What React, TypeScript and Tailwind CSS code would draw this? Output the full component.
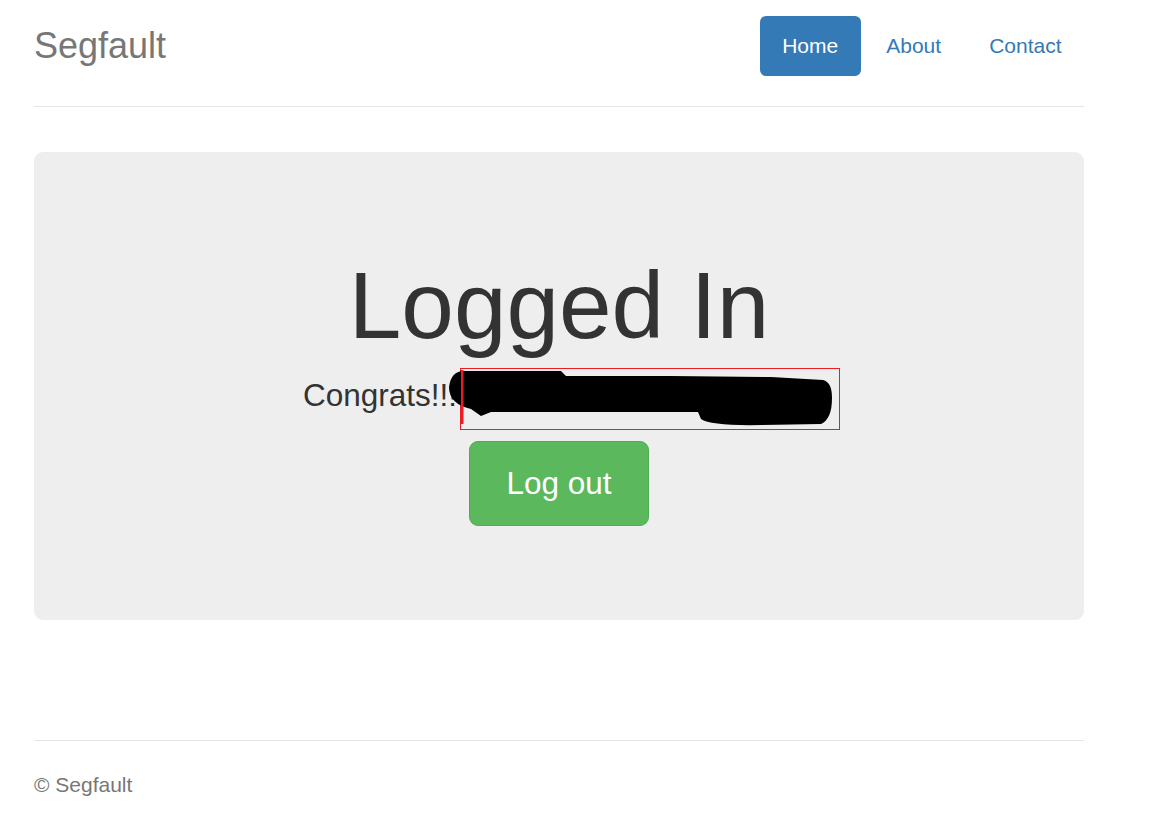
export default function App() {
  const links = ["Home", "About", "Contact"];

  return (
    <div className="min-h-[831px] bg-white font-['Liberation_Sans',Arial,sans-serif] text-[#333]">
      <div className="ml-[34px] w-[1050px]">
        {/* header */}
        <div className="flex items-start justify-between border-b border-[#e5e5e5] pt-[16px] pb-[30px]">
          <h3 className="text-[36px] leading-[60px] text-[#777]">Segfault</h3>
          <ul className="flex gap-[3px]">
            {links.map((l) => (
              <li key={l}>
                <a
                  href="#"
                  className={
                    l === "Home"
                      ? "block rounded-[6px] bg-[#337ab7] px-[22.5px] py-[15px] text-[21px] leading-[30px] text-white"
                      : "block rounded-[6px] px-[22.5px] py-[15px] text-[21px] leading-[30px] text-[#337ab7]"
                  }
                >
                  {l}
                </a>
              </li>
            ))}
          </ul>
        </div>

        {/* jumbotron */}
        <div className="mt-[45px] rounded-[9px] bg-[#eee] px-[90px] pt-[102px] pb-[94px] text-center">
          <h1 className="mb-[15px] text-[94.5px] leading-[1.1] text-[#333]">Logged In</h1>
          <p className="mb-[23.5px] text-[31.5px] leading-[45px] text-[#333]">
            Congrats!!!
            <span className="relative ml-[3px] inline-block h-[45px] w-[355px] align-top">
              <span className="absolute left-0 top-[-5px] h-[62px] w-[380px] border border-[#ec1c24]">
                <svg
                  className="absolute left-0 top-0 overflow-visible"
                  width="380"
                  height="62"
                  viewBox="0 0 380 62"
                >
                  <path
                    d="M3 2 L100 2 L105 7 L210 7 L310 8 L362 11 Q371 13 371 29 Q371 50 360 55 L300 56 Q250 57 240 50 L237 43 L30 43 L20 47 L10 40 Q-12 35 -12 18 Q-10 2 3 2 Z"
                    fill="#000"
                  />
                  <rect x="0" y="1" width="2.5" height="54" fill="#ec1c24" />
                </svg>
              </span>
            </span>
          </p>
          <a
            href="#"
            className="inline-block rounded-[9px] border border-[#4cae4c] bg-[#5cb85c] px-[36px] py-[19px] text-[31.5px] leading-[45px] text-white"
          >
            Log out
          </a>
        </div>

        {/* footer */}
        <div className="mt-[120px] border-t border-[#e5e5e5] pt-[28.5px]">
          <p className="text-[21px] leading-[30px] text-[#777]">© Segfault</p>
        </div>
      </div>
    </div>
  );
}
